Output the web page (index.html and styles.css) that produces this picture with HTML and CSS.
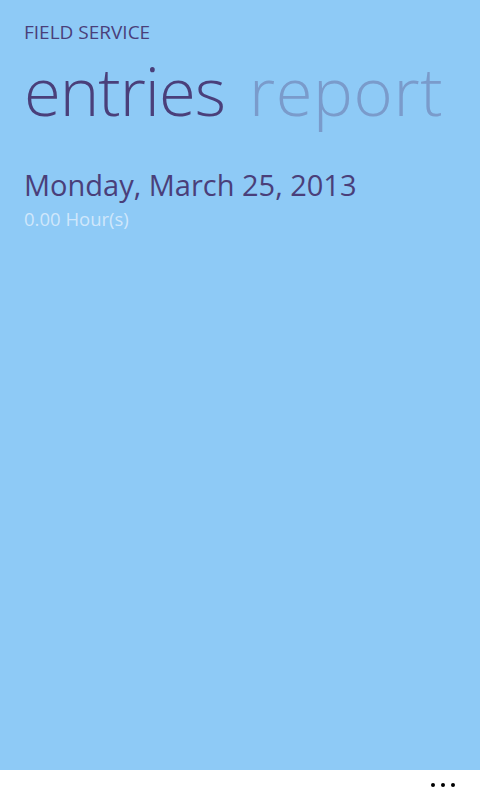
FILE: index.html
```html
<!DOCTYPE html>
<html>
<head>
<meta charset="utf-8">
<link rel="stylesheet" href="styles.css">
</head>
<body>
<div class="screen">
  <div class="app">
    <div class="app-title">FIELD SERVICE</div>
    <div class="pivot">
      <span class="pivot-item active">entries</span>
      <span class="pivot-item">report</span>
    </div>
    <div class="entry">
      <div class="entry-date">Monday, March 25, 2013</div>
      <div class="entry-hours">0.00 Hour(s)</div>
    </div>
  </div>
  <div class="appbar">
    <div class="more"><span></span><span></span><span></span></div>
  </div>
</div>
</body>
</html>
```
FILE: styles.css
```css
html, body {
  margin: 0;
  padding: 0;
}
body {
  font-family: "Open Sans", "Noto Sans", sans-serif;
  background: #8ecaf6;
}
.screen {
  width: 480px;
  height: 800px;
  display: flex;
  flex-direction: column;
  background: #8ecaf6;
}
.app {
  flex: 1;
  padding: 20px 0 0 24px;
}
.app-title {
  font-size: 19px;
  line-height: 24px;
  color: #4a3f7a;
}
.pivot {
  display: flex;
  gap: 24px;
  margin-top: 2px;
  white-space: nowrap;
}
.pivot-item {
  font-size: 67px;
  font-weight: 300;
  line-height: 88px;
  color: #7a9bcb;
  letter-spacing: 0.6px;
}
.pivot-item.active {
  color: #4a3f7a;
  letter-spacing: -1px;
}
.entry {
  margin-top: 32px;
}
.entry-date {
  font-size: 29px;
  line-height: 38px;
  color: #4a3f7a;
}
.entry-hours {
  margin-top: 3px;
  font-size: 18.5px;
  line-height: 24px;
  color: #d0e7fb;
}
.appbar {
  height: 30px;
  background: #ffffff;
  display: flex;
  justify-content: flex-end;
  align-items: center;
}
.more {
  display: flex;
  gap: 6px;
  margin-right: 25px;
}
.more span {
  width: 4px;
  height: 4px;
  border-radius: 50%;
  background: #000;
}
```
